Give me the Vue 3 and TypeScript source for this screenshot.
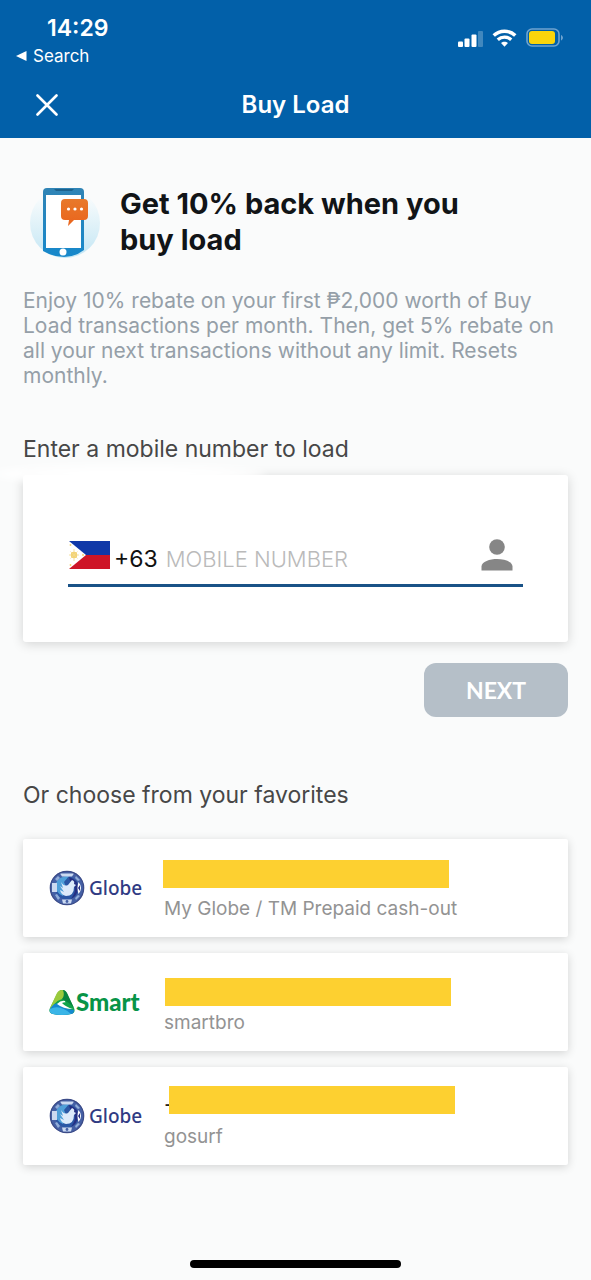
<script setup lang="ts">
import { ref } from 'vue'

interface Favorite {
  id: number
  brand: 'globe' | 'smart'
  name: string
  description: string
  maskLeft: number
  maskTop: number
}

const mobileNumber = ref('')

const favorites: Favorite[] = [
  { id: 1, brand: 'globe', name: '', description: 'My Globe / TM Prepaid cash-out', maskLeft: -1, maskTop: 0 },
  { id: 2, brand: 'smart', name: '', description: 'smartbro', maskLeft: 1, maskTop: 4 },
  { id: 3, brand: 'globe', name: '-', description: 'gosurf', maskLeft: 5, maskTop: -2 },
]
</script>

<template>
  <div class="screen">
    <header class="header">
      <div class="status">
        <div class="status-left">
          <span class="time">14:29</span>
          <a class="back" href="#">
            <svg width="11" height="10" viewBox="0 0 11 10" aria-hidden="true"><path d="M10.500 0v10L0 5z" fill="#fff" /></svg>
            Search
          </a>
        </div>
        <div class="status-icons">
          <svg width="25" height="17" viewBox="0 0 25 17" aria-hidden="true">
            <g fill="#fff">
              <rect x="0" y="11.500" width="5" height="5.500" rx="1" />
              <rect x="6.500" y="8.500" width="5" height="8.500" rx="1" />
              <rect x="13.500" y="4.500" width="5" height="12.500" rx="1" />
              <rect x="20" y="1" width="5" height="16" rx="1" opacity=".25" />
            </g>
          </svg>
          <svg width="25" height="18" viewBox="0 0 26 18" fill="none" stroke="#fff" aria-hidden="true">
            <path d="M1.800 6.500C8 .5 18 .5 24.200 6.500" stroke-width="3.600" />
            <path d="M6 10.800c4-3.700 10-3.700 14 0" stroke-width="3.400" />
            <path d="M13 18l-3.600-3.800c2-1.900 5.200-1.900 7.200 0z" fill="#fff" stroke="none" />
          </svg>
          <svg width="38" height="20" viewBox="0 0 38 20" aria-hidden="true">
            <rect x="1" y="1" width="32" height="17" rx="5" fill="none" stroke="#6fa3d0" stroke-width="1.600" />
            <rect x="3" y="3" width="26" height="13" rx="3" fill="#fbd50b" />
            <path d="M35 7c2.600 1 2.600 4.500 0 5.500z" fill="#6fa3d0" />
          </svg>
        </div>
      </div>
      <div class="nav">
        <button class="close" type="button" aria-label="Close">
          <svg width="22" height="22" viewBox="0 0 22 22" aria-hidden="true"><path d="M1.500 1.500l19 19M20.500 1.500l-19 19" stroke="#fff" stroke-width="2.600" stroke-linecap="round" /></svg>
        </button>
        <h1>Buy Load</h1>
      </div>
    </header>

    <main class="content">
      <section class="promo">
        <svg class="promo-art" width="72" height="72" viewBox="0 0 72 72" aria-hidden="true">
          <defs>
            <linearGradient id="halo" x1="0" y1="0" x2="0" y2="1">
              <stop offset=".15" stop-color="#f7fbfc" /><stop offset="1" stop-color="#c3e6f4" />
            </linearGradient>
            <linearGradient id="phone" x1="0" y1="0" x2="0" y2="1">
              <stop offset="0" stop-color="#3084b5" /><stop offset="1" stop-color="#1688cb" />
            </linearGradient>
            <linearGradient id="bubble" x1="0" y1="0" x2="0" y2="1">
              <stop offset="0" stop-color="#e8792b" /><stop offset="1" stop-color="#ea641c" />
            </linearGradient>
          </defs>
          <circle cx="36" cy="37" r="35" fill="url(#halo)" />
          <path d="M18 2h33q4 0 4 4v58q-9 7-20 7t-21-6V6q0-4 4-4z" fill="url(#phone)" />
          <path d="M25 3h20l-2 2H27z" fill="#1c628d" />
          <path d="M17 9h35v53H17z" fill="#fff" />
          <circle cx="34" cy="66" r="3.500" fill="#fff" />
          <path d="M36 13h19q4 0 4 4v13q0 4-4 4H45l-6 6 1-6h-4q-4 0-4-4V17q0-4 4-4z" fill="url(#bubble)" />
          <g fill="#fff"><circle cx="39.500" cy="23" r="1.600" /><circle cx="46" cy="23" r="1.600" /><circle cx="52.500" cy="23" r="1.600" /></g>
        </svg>
        <h2>Get 10% back when you buy load</h2>
      </section>
      <p class="terms">Enjoy 10% rebate on your first ₱2,000 worth of Buy Load transactions per month. Then, get 5% rebate on all your next transactions without any limit. Resets monthly.</p>

      <form class="load-form" @submit.prevent>
        <label class="section-title" for="mobile">Enter a mobile number to load</label>
        <div class="entry-card">
          <div class="field">
            <svg class="flag" width="42" height="30" viewBox="0 0 42 30" role="img" aria-label="Philippines">
              <path d="M0 1h42v14H0z" fill="#1038a8" />
              <path d="M0 15h42v14H0z" fill="#ce1527" />
              <path d="M0 1v28h1l17-14L1 1z" fill="#fff" />
              <circle cx="6" cy="15" r="3.200" fill="#f3d06b" />
              <path d="M6 9v12M1 15h10M2.500 11.500l7 7M9.500 11.500l-7 7" stroke="#f3d98c" stroke-width=".8" />
              <g fill="#f3d06b"><circle cx="2.500" cy="5" r=".9" /><circle cx="2.500" cy="25" r=".9" /><circle cx="15" cy="15" r=".9" /></g>
            </svg>
            <span class="prefix">+63</span>
            <input id="mobile" v-model="mobileNumber" type="tel" placeholder="MOBILE NUMBER" />
            <button class="contacts" type="button" aria-label="Choose from contacts">
              <svg width="32" height="32" viewBox="0 0 32 32" fill="#868686" aria-hidden="true">
                <circle cx="16" cy="8" r="7.800" />
                <path d="M.5 31.500v-4C.5 22.500 9 20 16 20s15.500 2.500 15.500 7.500v4z" />
              </svg>
            </button>
          </div>
        </div>
        <button class="next" type="submit" disabled>NEXT</button>
      </form>

      <h3 class="section-title">Or choose from your favorites</h3>
      <ul class="favorites">
        <li v-for="item in favorites" :key="item.id">
          <button class="favorite" type="button">
            <span v-if="item.brand === 'globe'" class="brand globe">
              <svg width="36" height="36" viewBox="0 0 36 36" aria-hidden="true">
                <circle cx="18" cy="18" r="17" fill="#4560a5" />
                <circle cx="18" cy="18" r="11.800" fill="#2b57a5" />
                <path d="M7 13Q10 6 20 6l-5 6 2 5-3 9Q5 22 7 13z" fill="#4f9fd8" />
                <path d="M20 7q10 3 9 12-1 7-7 10 6-8 3-14-4-2-5-8z" fill="#252f82" />
                <path d="M12 12q3 5 7 3l4-5q3 1 2 4l2 1-2 2q0 9-8 9-5-1-6-6l4 2-4-6 3 2z" fill="#dceafa" />
                <path d="M11 3.500h14l-2 3H13zM3 13h5v9H3zM13 29.500h10l-1 4h-8z" fill="#cbd9f0" />
                <path d="M29.500 12q5 6 0 12-2-6 0-12z" fill="#fff" />
                <path d="M31 15v6l-2-3z" fill="#252f82" />
                <path d="M6 9l3-3 2 2-3 3zM27 6l4 4-2 1-3-3zM6 25l2-1 3 4-2 2zM26 28l3-3 2 1-4 4z" fill="#91add9" />
                <circle cx="18" cy="31.500" r="1.400" fill="#4560a5" />
                <circle cx="18" cy="18" r="16.700" fill="none" stroke="#3c4b87" stroke-width="1.200" />
              </svg>
              Globe
            </span>
            <span v-else class="brand smart">
              <svg width="26" height="26" viewBox="0 0 26 26" aria-hidden="true">
                <path d="M13 1q3 0 5 4l7 14q2 5-3 6-9 2-18 0-5-1-3-6L8 5q2-4 5-4z" fill="#10a34a" />
                <path d="M13 1q-4 0-6 5L1 19q-1 3 1 5Q3 13 13 10q4-1 6-3-2-6-6-6z" fill="#9aca3c" />
                <path d="M14 1q3 0 5 5l6 13q-5-6-12-9 3-3 1-9z" fill="#07853e" />
                <path d="M1 20q3-6 9-6 5 6 15 7 0 4-3 4-9 2-18 0-4-1-3-5z" fill="#1689cf" />
                <path d="M8 15q4-4 8-3 0 4 8 8-10 0-16-5z" fill="#fff" />
                <path d="M13 14q4-2 7 1l4 5q-7-2-11-6z" fill="#10a34a" />
                <path d="M1 20q10-5 21 5-9 2-18 0-4-1-3-5z" fill="#3ab5e7" />
              </svg>
              Smart
            </span>
            <span class="details">
              <span class="name">
                {{ item.name }}
                <span class="mask" :style="{ left: item.maskLeft + 'px', top: item.maskTop + 'px' }"></span>
              </span>
              <span class="description">{{ item.description }}</span>
            </span>
          </button>
        </li>
      </ul>
    </main>
    <div class="home-indicator"></div>
  </div>
</template>

<style>
body {
  background: #fafbfb;
}
</style>

<style scoped>
.screen {
  box-sizing: border-box;
  min-height: 100vh;
  display: flex;
  flex-direction: column;
  overflow-x: hidden;
  background: #fafbfb;
  color: #474747;
  font-family: Inter, "Liberation Sans", sans-serif;
}
button {
  padding: 0;
  border: 0;
  background: none;
  font: inherit;
  color: inherit;
}
svg {
  display: block;
  flex: none;
}
.header {
  background: #0260a9;
  color: #fff;
}
.status {
  display: flex;
  justify-content: space-between;
  padding: 14px 27px 0 16px;
}
.status-left {
  display: flex;
  flex-direction: column;
}
.time {
  padding-left: 31px;
  font-size: 23px;
  line-height: 28px;
  font-weight: 600;
}
.back {
  display: flex;
  align-items: center;
  gap: 6px;
  color: #fff;
  font-size: 17px;
  line-height: 28px;
  font-weight: 400;
  text-decoration: none;
}
.status-icons {
  display: flex;
  align-items: center;
  gap: 9px;
  height: 48px;
}
.nav {
  display: grid;
  grid-template-columns: 22px 1fr 22px;
  align-items: center;
  height: 66px;
  padding: 2px 36px 0;
}
.close {
  display: block;
}
h1 {
  margin: 0;
  text-align: center;
  font-size: 24px;
  line-height: 32px;
  font-weight: 600;
}
.content {
  padding: 48px 23px 0;
}
.promo {
  display: flex;
  gap: 19px;
  padding-left: 6px;
}
h2 {
  margin: 0;
  max-width: 360px;
  color: #111417;
  font-size: 29px;
  line-height: 36px;
  font-weight: 700;
}
.terms {
  max-width: 540px;
  margin: 30px 0 0;
  color: #959fa8;
  font-size: 21px;
  line-height: 25px;
}
.section-title {
  display: block;
  margin: 0;
  font-size: 23px;
  line-height: 32px;
  font-weight: 400;
}
.load-form {
  display: flex;
  flex-direction: column;
  margin: 45px 0 62px;
}
.entry-card {
  position: relative;
  margin-top: 10px;
  padding: 59px 45px 55px;
  border-radius: 3px;
  background: #fff;
  box-shadow: 0 2px 12px rgba(0, 0, 0, 0.16);
}
.entry-card::before {
  content: "";
  position: absolute;
  top: -10px;
  left: -30px;
  width: 50%;
  height: 18px;
  border-radius: 50%;
  background: #fff;
  filter: blur(4px);
}
.field {
  display: flex;
  align-items: center;
  height: 50px;
  border-bottom: 3px solid #195287;
}
.flag,
.contacts {
  margin-bottom: 8px;
}
.prefix {
  margin: 0 8px 0 4px;
  color: #111;
  font-size: 23px;
}
input {
  flex: 1;
  min-width: 0;
  padding: 0;
  border: 0;
  outline: 0;
  background: none;
  color: #111;
  font: 300 22px/32px Inter, "Liberation Sans", sans-serif;
}
input::placeholder {
  color: #bababa;
  opacity: 1;
}
.contacts {
  margin-right: 10px;
}
.next {
  align-self: flex-end;
  width: 144px;
  margin-top: 21px;
  border-radius: 12px;
  background: #b5bfc8;
  color: #fff;
  font: 700 23px/54px Lato, sans-serif;
}
.favorites {
  display: flex;
  flex-direction: column;
  gap: 16px;
  margin: 28px 0 0;
  padding: 0;
  list-style: none;
}
.favorite {
  display: flex;
  align-items: center;
  width: 100%;
  height: 98px;
  padding-left: 26px;
  border-radius: 2px;
  background: #fff;
  box-shadow: 0 2px 10px rgba(0, 0, 0, 0.16);
  text-align: left;
}
.brand {
  display: flex;
  align-items: center;
  flex: none;
  width: 115px;
}
.globe {
  gap: 4px;
  color: #303b83;
  font: 500 19px/36px "Noto Sans", sans-serif;
}
.smart {
  gap: 1px;
  color: #079447;
  font: 900 24px/36px Lato, sans-serif;
}
.details {
  display: flex;
  flex-direction: column;
  gap: 7px;
  padding-top: 6px;
}
.name {
  position: relative;
  height: 28px;
  color: #222;
  font-size: 22px;
  line-height: 32px;
}
.mask {
  position: absolute;
  width: 286px;
  height: 28px;
  background: #fdd030;
}
.description {
  color: #939393;
  font-size: 19px;
  line-height: 28px;
}
.home-indicator {
  align-self: center;
  width: 211px;
  height: 8px;
  margin: auto 0 12px;
  border-radius: 4px;
  background: #000;
}
</style>
